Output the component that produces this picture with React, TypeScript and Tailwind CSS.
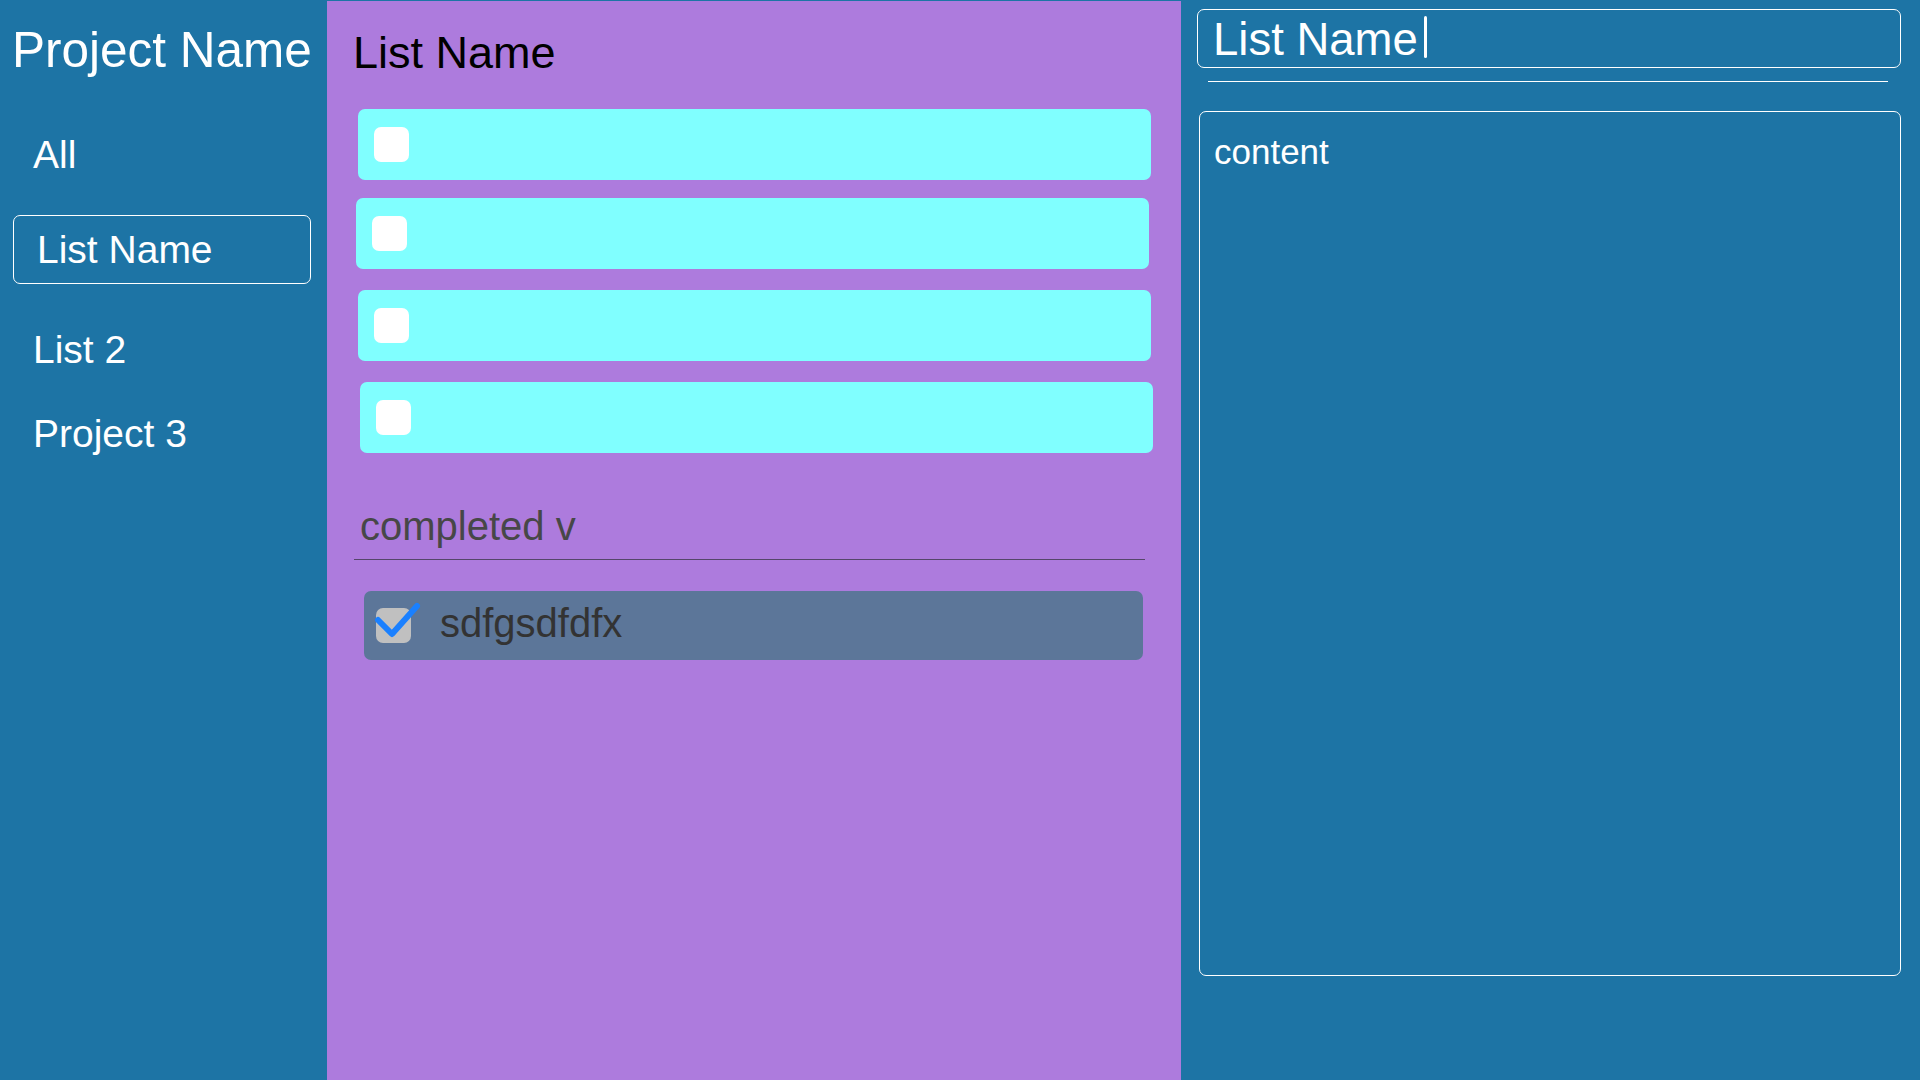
const font = { fontFamily: '"Liberation Sans", Arial, sans-serif' };

const lists = [
  { name: "All", cls: "mt-[60px]" },
  { name: "List Name", cls: "mt-[41px]", active: true },
  { name: "List 2", cls: "mt-[46px]" },
  { name: "Project 3", cls: "mt-[45px]" },
];

// todo rows are a little jagged in the original, keep it
const todos = [
  { cls: "mt-[34px] ml-[31px]" },
  { cls: "mt-[18px] ml-[29px]" },
  { cls: "mt-[21px] ml-[31px]" },
  { cls: "mt-[21px] ml-[33px]" },
];

const Sidebar = () => {
  return (
    <div className="w-[327px] shrink-0 bg-[#1d74a5] text-white">
      <h1 className="pt-[25px] pl-[12px] text-[49.5px] leading-none">Project Name</h1>
      {lists.map((l) =>
        l.active ? (
          <div
            key={l.name}
            className={`${l.cls} ml-[13px] w-[298px] h-[69px] flex items-center pl-[23px] border border-white rounded-[7px]`}
          >
            <span className="text-[39px] leading-none">{l.name}</span>
          </div>
        ) : (
          <div key={l.name} className={`${l.cls} pl-[33px] text-[39px] leading-none`}>
            {l.name}
          </div>
        )
      )}
    </div>
  );
};

const TodoRow = ({ cls }: { cls: string }) => {
  return (
    <div className={`${cls} w-[793px] h-[71px] bg-[#80ffff] rounded-[7px] flex items-center pl-[16px]`}>
      <div className="w-[35px] h-[35px] bg-white rounded-[7px]" />
    </div>
  );
};

const TodoList = () => {
  return (
    <div className="w-[854px] shrink-0 mt-[1px] bg-[#ad7bdd]">
      <h2 className="pt-[29px] pl-[26px] text-[45px] leading-none text-black">List Name</h2>
      {todos.map((t, i) => (
        <TodoRow key={i} cls={t.cls} />
      ))}

      <div className="mt-[53px] ml-[27px] w-[791px] pl-[6px] pb-[12px] border-b border-[#55466a]">
        <span className="text-[40px] leading-none text-[#474747]">completed v</span>
      </div>

      <div className="mt-[31px] ml-[37px] w-[779px] h-[69px] bg-[#5c7699] rounded-[7px] flex items-center pl-[12px]">
        <div className="relative w-[35px] h-[35px] bg-[#c0c0c0] rounded-[7px]">
          <svg className="absolute left-[-2px] top-[-8px]" width="48" height="44" viewBox="0 0 48 44">
            <polyline
              points="4,20 18,34 43,6"
              fill="none"
              stroke="#1a80ff"
              strokeWidth="6"
              strokeLinecap="round"
              strokeLinejoin="round"
            />
          </svg>
        </div>
        <span className="ml-[29px] mb-[5px] text-[40px] leading-none text-[#333333]">sdfgsdfdfx</span>
      </div>
    </div>
  );
};

const Details = () => {
  return (
    <div className="flex-1 bg-[#1d74a5] text-white pl-[16px] pr-[19px] pt-[9px]">
      <div className="h-[59px] border border-white rounded-[7px] flex items-start pl-[15px] pt-[7px]">
        <span className="text-[45.5px] leading-none">List Name</span>
        <span className="ml-[6px] mt-[-1px] w-[3px] h-[42px] bg-white rounded-sm" />
      </div>
      <div className="ml-[11px] mr-[13px] mt-[13px] h-px bg-white" />
      <div className="ml-[2px] mt-[29px] h-[865px] border border-white rounded-[7px] pl-[14px] pt-[22px]">
        <span className="text-[35px] leading-none">content</span>
      </div>
    </div>
  );
};

export default function App() {
  return (
    <div className="flex w-[1920px] h-[1080px] bg-[#1d74a5] overflow-hidden" style={font}>
      <Sidebar />
      <TodoList />
      <Details />
    </div>
  );
}
